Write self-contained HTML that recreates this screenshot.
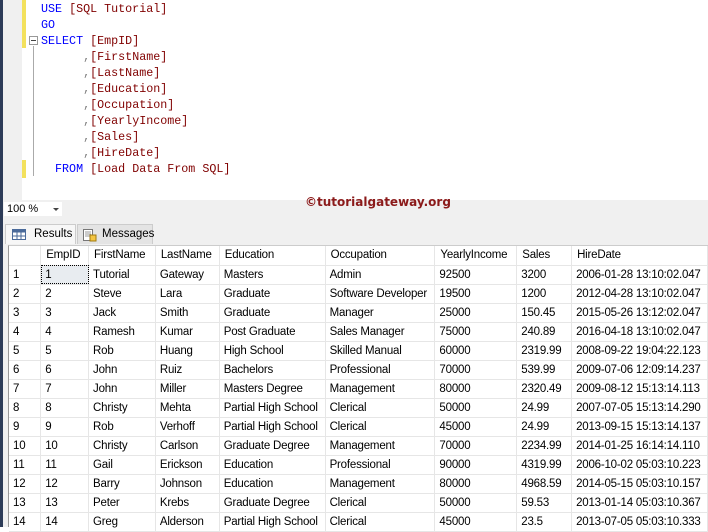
<!DOCTYPE html>
<html><head><meta charset="utf-8"><style>
*{margin:0;padding:0;box-sizing:border-box}
body{width:708px;height:527px;overflow:hidden;background:#fff;position:relative;font-family:"Liberation Sans",sans-serif}
.strip{position:absolute;left:0;top:0;width:3px;height:527px;background:#2d3c58}
.gut{position:absolute;left:3px;top:0;width:19px;height:200px;background:#f0f0f0}
.yb{position:absolute;left:22px;width:4px;background:#f3e15d}
.code{position:absolute;left:41px;top:1px;font-family:"Liberation Mono",monospace;font-size:11.7px;line-height:16px;white-space:pre;color:#000}
.k{color:#0000ff}.g{color:#808080}.r{color:#800000}
.fold{position:absolute;left:29px;top:36px;width:9px;height:9px;border:1px solid #999;background:#fff}
.fold:after{content:"";position:absolute;left:1px;top:3px;width:5px;height:1px;background:#444}
.vl{position:absolute;left:33px;top:46px;width:1px;height:130px;background:#aaa}
.wm{position:absolute;left:305px;top:195px;font-family:"DejaVu Sans",sans-serif;font-weight:bold;font-size:12px;color:#8b1a1a}
.tb{position:absolute;left:3px;top:200px;width:705px;height:327px;background:#f0f0f0}
.zoom{position:absolute;left:4px;top:202px;width:58px;height:14px;background:#fff;font-size:11px;line-height:14px;padding-left:3px}
.zoom:after{content:"";position:absolute;right:3px;top:6px;border:3px solid transparent;border-top:3px solid #444}
.tab{position:absolute;top:224px;height:20px;font-size:11.5px;line-height:19px;border:1px solid #ccc;border-bottom:none}
.grid{position:absolute;left:8px;top:245px;width:700px;height:282px;background:#fff;border-left:1px solid #999;border-top:1px solid #ccc}
table{border-collapse:collapse;font-size:11.5px;table-layout:fixed}
td{height:19px;border-right:1px solid #e6e6e6;border-bottom:1px solid #e6e6e6;padding-left:4px;white-space:nowrap;overflow:hidden;letter-spacing:-0.2px}
tr.h td{padding-left:5px}
</style></head><body>
<div class="strip"></div><div class="gut"></div>
<div class="yb" style="top:0;height:48px"></div>
<div class="yb" style="top:160px;height:18px"></div>
<div class="fold"></div><div class="vl"></div>
<div class="code"><span class="k">USE</span> <span class="r">[SQL Tutorial]</span>
<span class="k">GO</span>
<span class="k">SELECT</span> <span class="r">[EmpID]</span>
      <span class="g">,</span><span class="r">[FirstName]</span>
      <span class="g">,</span><span class="r">[LastName]</span>
      <span class="g">,</span><span class="r">[Education]</span>
      <span class="g">,</span><span class="r">[Occupation]</span>
      <span class="g">,</span><span class="r">[YearlyIncome]</span>
      <span class="g">,</span><span class="r">[Sales]</span>
      <span class="g">,</span><span class="r">[HireDate]</span>
  <span class="k">FROM</span> <span class="r">[Load Data From SQL]</span></div>
<div class="tb"></div>
<div class="wm">©tutorialgateway.org</div>
<div class="zoom">100 %</div>
<div class="tab" style="left:5px;width:71px;background:#f7f7f7;padding-left:28px">Results
<svg style="position:absolute;left:6px;top:4px" width="14" height="11"><rect x=".5" y=".5" width="13" height="10" fill="#fff" stroke="#4a6a9a"/><rect x=".5" y=".5" width="13" height="3" fill="#4a6a9a"/><path d="M5 1V11M9 1V11M1 7H13" stroke="#4a6a9a"/></svg></div>
<div class="tab" style="left:77px;width:76px;background:#e4e4e4;padding-left:24px">Messages
<svg style="position:absolute;left:4px;top:3px" width="15" height="14"><rect x="1.5" y="1.5" width="9" height="11" fill="#fff" stroke="#777"/><path d="M3 4h6M3 6h6M3 8h5" stroke="#999"/><rect x="8" y="7" width="6" height="6" fill="#f4c542" stroke="#a07a10"/></svg></div>
<div class="grid"><table>
<colgroup><col style="width:32px"><col style="width:48px"><col style="width:67px"><col style="width:64px"><col style="width:106px"><col style="width:110px"><col style="width:82px"><col style="width:55px"><col style="width:136px"></colgroup>
<tr class="h"><td></td><td>EmpID</td><td>FirstName</td><td>LastName</td><td>Education</td><td>Occupation</td><td>YearlyIncome</td><td>Sales</td><td>HireDate</td></tr>
<tr><td>1</td><td style="background:#e8ecf0;outline:1px dotted #000;outline-offset:-1px">1</td><td>Tutorial</td><td>Gateway</td><td>Masters</td><td>Admin</td><td>92500</td><td>3200</td><td>2006-01-28 13:10:02.047</td></tr>
<tr><td>2</td><td>2</td><td>Steve</td><td>Lara</td><td>Graduate</td><td>Software Developer</td><td>19500</td><td>1200</td><td>2012-04-28 13:10:02.047</td></tr>
<tr><td>3</td><td>3</td><td>Jack</td><td>Smith</td><td>Graduate</td><td>Manager</td><td>25000</td><td>150.45</td><td>2015-05-26 13:12:02.047</td></tr>
<tr><td>4</td><td>4</td><td>Ramesh</td><td>Kumar</td><td>Post Graduate</td><td>Sales Manager</td><td>75000</td><td>240.89</td><td>2016-04-18 13:10:02.047</td></tr>
<tr><td>5</td><td>5</td><td>Rob</td><td>Huang</td><td>High School</td><td>Skilled Manual</td><td>60000</td><td>2319.99</td><td>2008-09-22 19:04:22.123</td></tr>
<tr><td>6</td><td>6</td><td>John</td><td>Ruiz</td><td>Bachelors</td><td>Professional</td><td>70000</td><td>539.99</td><td>2009-07-06 12:09:14.237</td></tr>
<tr><td>7</td><td>7</td><td>John</td><td>Miller</td><td>Masters Degree</td><td>Management</td><td>80000</td><td>2320.49</td><td>2009-08-12 15:13:14.113</td></tr>
<tr><td>8</td><td>8</td><td>Christy</td><td>Mehta</td><td>Partial High School</td><td>Clerical</td><td>50000</td><td>24.99</td><td>2007-07-05 15:13:14.290</td></tr>
<tr><td>9</td><td>9</td><td>Rob</td><td>Verhoff</td><td>Partial High School</td><td>Clerical</td><td>45000</td><td>24.99</td><td>2013-09-15 15:13:14.137</td></tr>
<tr><td>10</td><td>10</td><td>Christy</td><td>Carlson</td><td>Graduate Degree</td><td>Management</td><td>70000</td><td>2234.99</td><td>2014-01-25 16:14:14.110</td></tr>
<tr><td>11</td><td>11</td><td>Gail</td><td>Erickson</td><td>Education</td><td>Professional</td><td>90000</td><td>4319.99</td><td>2006-10-02 05:03:10.223</td></tr>
<tr><td>12</td><td>12</td><td>Barry</td><td>Johnson</td><td>Education</td><td>Management</td><td>80000</td><td>4968.59</td><td>2014-05-15 05:03:10.157</td></tr>
<tr><td>13</td><td>13</td><td>Peter</td><td>Krebs</td><td>Graduate Degree</td><td>Clerical</td><td>50000</td><td>59.53</td><td>2013-01-14 05:03:10.367</td></tr>
<tr><td>14</td><td>14</td><td>Greg</td><td>Alderson</td><td>Partial High School</td><td>Clerical</td><td>45000</td><td>23.5</td><td>2013-07-05 05:03:10.333</td></tr>
</table></div>
</body></html>
